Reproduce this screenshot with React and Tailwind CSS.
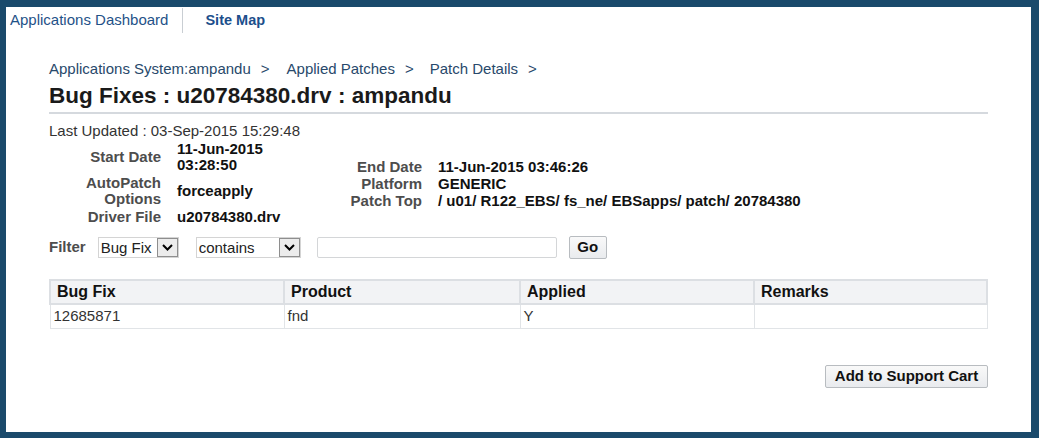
import React from "react";

function Chevron() {
  return (
    <svg width="11" height="7" viewBox="0 0 11 7" className="block">
      <path d="M1 1 L5.5 5.5 L10 1" fill="none" stroke="#000" strokeWidth="2" />
    </svg>
  );
}

function Select({ text, width }) {
  return (
    <div
      className="flex h-[21px] items-stretch border border-[#d4d4d4] bg-white"
      style={{ width }}
    >
      <div className="flex flex-1 items-center pl-[2px] text-[15px] leading-none text-[#222]">{text}</div>
      <div className="flex w-[21px] items-center justify-center border border-[#8e8e8e] bg-[#ececec]">
        <Chevron />
      </div>
    </div>
  );
}

export default function App() {
  return (
    <div
      className="h-[438px] w-[1039px] bg-[#1a4a6b] pt-[7px] pl-[6px] pr-[8px] pb-[6px]"
      style={{ fontFamily: '"Liberation Sans", Arial, sans-serif' }}
    >
      <div className="h-full w-full bg-white">
        {/* top nav */}
        <div className="flex h-[27px] items-center">
          <span className="pl-[4px] text-[15px] text-[#1f5288]">Applications Dashboard</span>
          <span className="ml-[14px] h-[25px] w-px bg-[#c9ced3]" />
          <span className="ml-[22px] text-[14.5px] font-bold text-[#1c4f8c]">Site Map</span>
        </div>

        <div className="px-[43px]">
          {/* breadcrumb */}
          <div className="mt-[27px] flex h-[16px] items-center text-[15px] leading-[16px] text-[#28496b]">
            <span>Applications System:ampandu</span>
            <span className="ml-[10px]">&gt;</span>
            <span className="ml-[17px]">Applied Patches</span>
            <span className="ml-[10px]">&gt;</span>
            <span className="ml-[16px]">Patch Details</span>
            <span className="ml-[10px]">&gt;</span>
          </div>

          {/* title */}
          <div className="mt-[8px] h-[22px] text-[22.5px] font-bold leading-[22px] text-[#1a1a1a]">
            Bug Fixes : u20784380.drv : ampandu
          </div>
          <div className="mt-[5px] h-[2px] bg-[#d5d9de]" />

          {/* last updated */}
          <div className="mt-[9px] h-[16px] text-[15px] leading-[16px] text-[#333]">
            Last Updated : 03-Sep-2015 15:29:48
          </div>

          {/* details */}
          <div className="mt-[1px] flex items-center text-[15px] font-bold leading-[16px]">
            <div className="flex flex-col">
              <div className="flex items-center py-[1px]">
                <div className="w-[112px] text-right text-[#4d4d4d]">Start Date</div>
                <div className="ml-[16px] w-[112px] text-[#111]">
                  11-Jun-2015
                  <br />
                  03:28:50
                </div>
              </div>
              <div className="flex items-center py-[1px]">
                <div className="w-[112px] text-right text-[#4d4d4d]">
                  AutoPatch
                  <br />
                  Options
                </div>
                <div className="ml-[16px] w-[112px] text-[#111]">forceapply</div>
              </div>
              <div className="flex items-center py-[1px]">
                <div className="w-[112px] text-right text-[#4d4d4d]">Driver File</div>
                <div className="ml-[16px] w-[112px] text-[#111]">u20784380.drv</div>
              </div>
            </div>
            <div className="ml-[51px] flex flex-col leading-[17px]">
              <div className="flex">
                <div className="w-[82px] text-right text-[#4d4d4d]">End Date</div>
                <div className="ml-[16px] text-[#111]">11-Jun-2015 03:46:26</div>
              </div>
              <div className="flex">
                <div className="w-[82px] text-right text-[#4d4d4d]">Platform</div>
                <div className="ml-[16px] text-[#111]">GENERIC</div>
              </div>
              <div className="flex">
                <div className="w-[82px] text-right text-[#4d4d4d]">Patch Top</div>
                <div className="ml-[16px] text-[#111]">/ u01/ R122_EBS/ fs_ne/ EBSapps/ patch/ 20784380</div>
              </div>
            </div>
          </div>

          {/* filter */}
          <div className="mt-[10px] flex h-[23px] items-center">
            <span className="text-[15px] font-bold text-[#4d4d4d]">Filter</span>
            <div className="ml-[12px]">
              <Select text="Bug Fix" width="81px" />
            </div>
            <div className="ml-[17px]">
              <Select text="contains" width="105px" />
            </div>
            <div className="ml-[16px] h-[21px] w-[240px] rounded-[2px] border border-[#d4d6d8] bg-white" />
            <button className="ml-[12px] flex h-[23px] w-[38px] items-center justify-center rounded-[2px] border border-[#b8bcc0] bg-gradient-to-b from-[#f9f9f9] to-[#e9ebee] text-[15px] font-bold text-[#111]">
              Go
            </button>
          </div>

          {/* table */}
          <table className="mt-[20px] w-[939px] table-fixed border-collapse">
            <thead>
              <tr className="h-[24px] bg-[#f2f3f5]">
                <th className="w-[234px] border-2 border-[#dcdfe3] pl-[6px] text-left text-[16px] font-bold leading-[18px] text-[#111]">Bug Fix</th>
                <th className="w-[236px] border-2 border-[#dcdfe3] pl-[6px] text-left text-[16px] font-bold leading-[18px] text-[#111]">Product</th>
                <th className="w-[234px] border-2 border-[#dcdfe3] pl-[6px] text-left text-[16px] font-bold leading-[18px] text-[#111]">Applied</th>
                <th className="border-2 border-[#dcdfe3] pl-[6px] text-left text-[16px] font-bold leading-[18px] text-[#111]">Remarks</th>
              </tr>
            </thead>
            <tbody>
              <tr className="h-[24px]">
                <td className="border border-[#e1e4e7] pl-[3px] text-[15px] leading-[18px] text-[#333]">12685871</td>
                <td className="border border-[#e1e4e7] pl-[3px] text-[15px] leading-[18px] text-[#333]">fnd</td>
                <td className="border border-[#e1e4e7] pl-[3px] text-[15px] leading-[18px] text-[#333]">Y</td>
                <td className="border border-[#e1e4e7] pl-[3px] text-[15px] leading-[18px] text-[#333]"></td>
              </tr>
            </tbody>
          </table>

          {/* button */}
          <div className="mt-[36px] flex justify-end">
            <button className="flex h-[23px] w-[163px] items-center justify-center rounded-[2px] border border-[#b8bcc0] bg-gradient-to-b from-[#f9f9f9] to-[#e9ebee] text-[15px] font-bold text-[#111]">
              Add to Support Cart
            </button>
          </div>
        </div>
      </div>
    </div>
  );
}
